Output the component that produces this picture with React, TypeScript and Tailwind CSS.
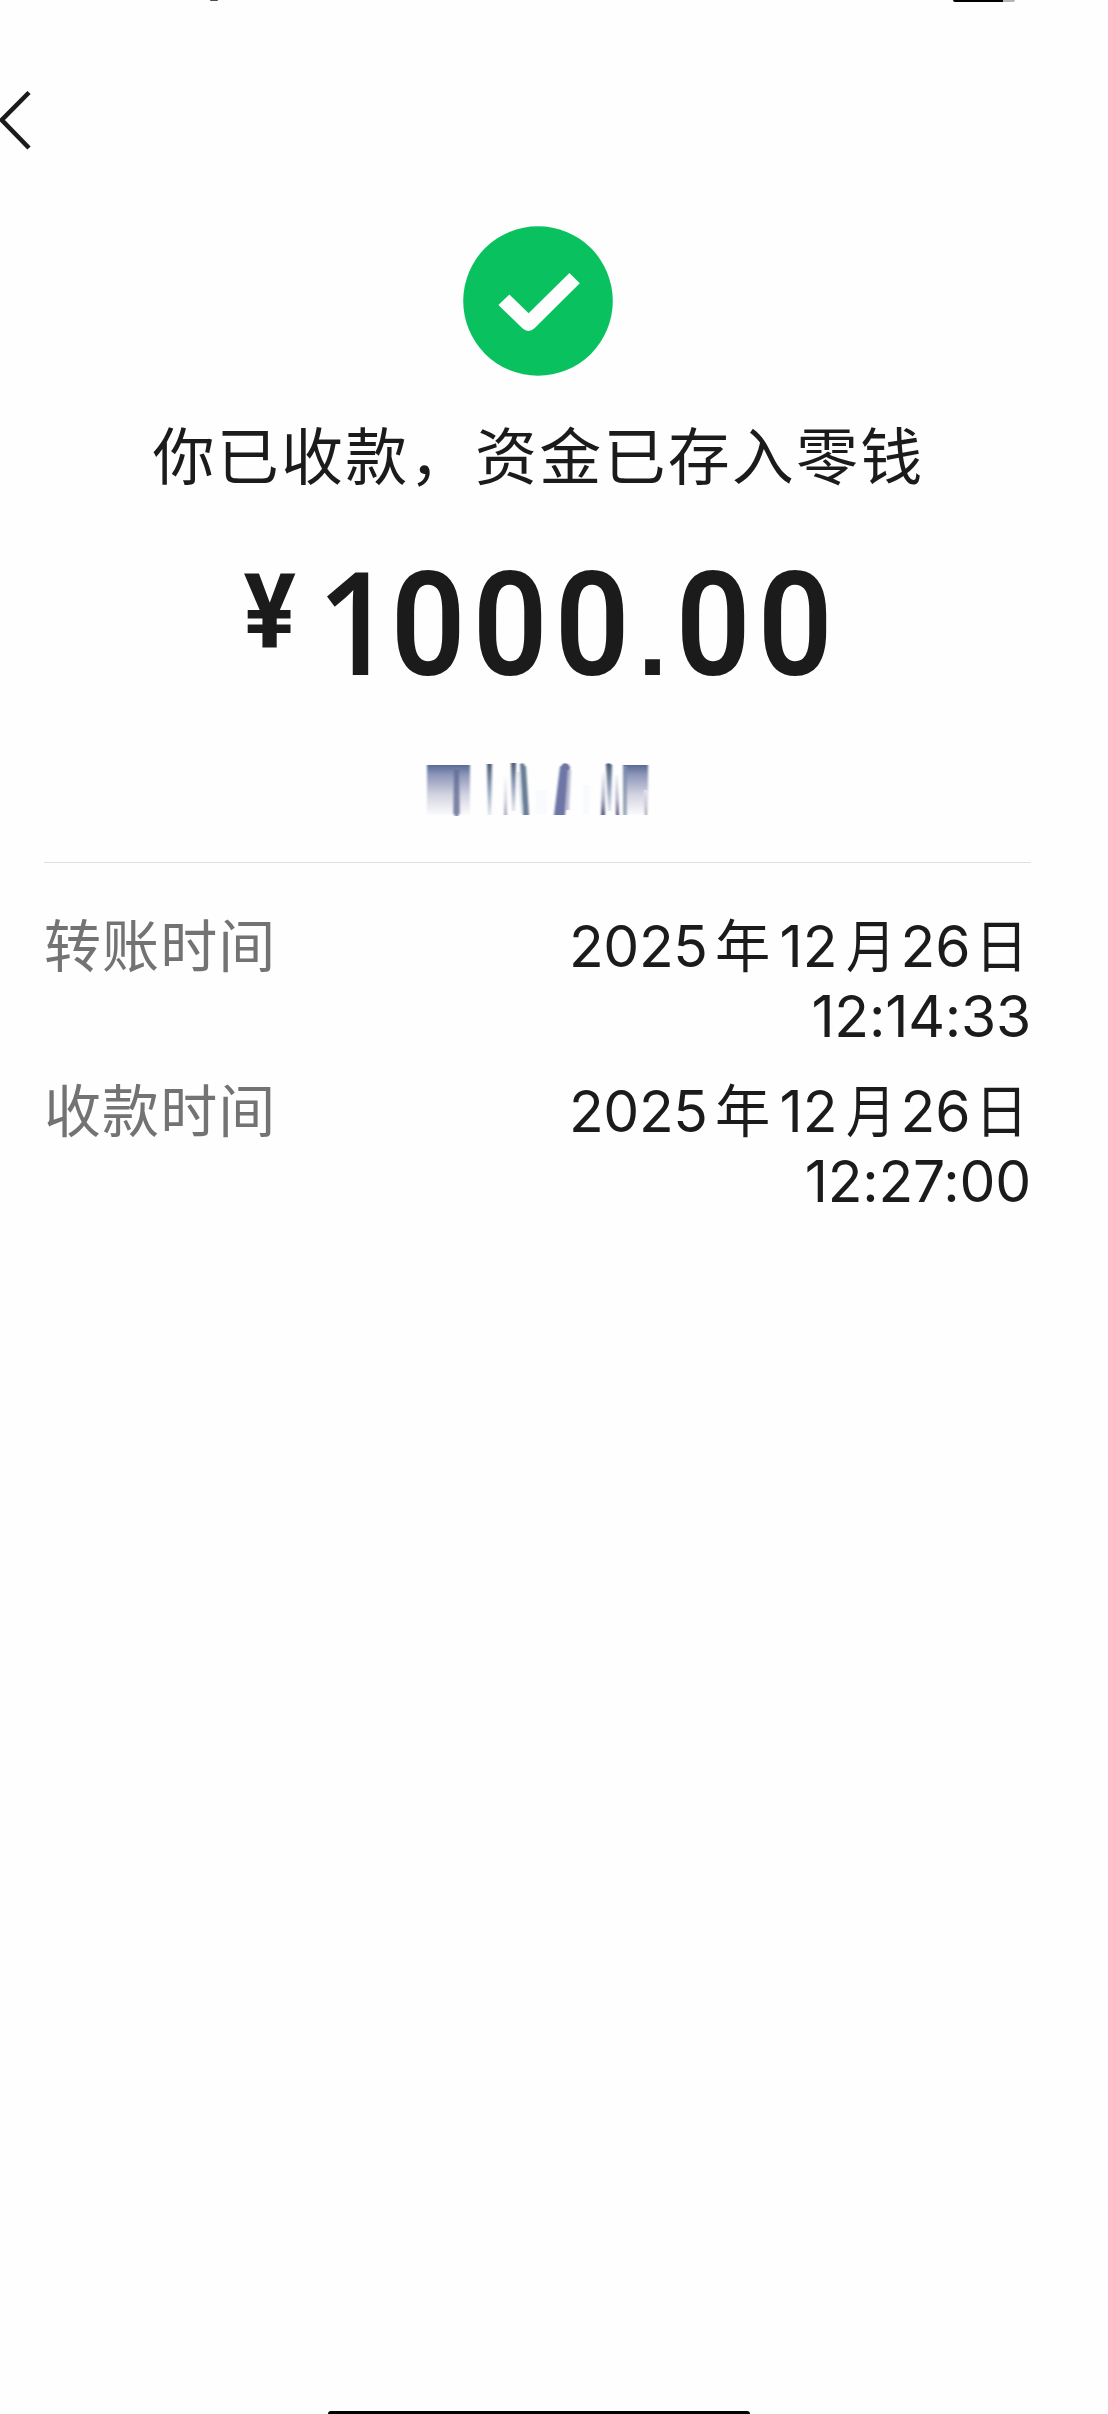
import clsx from "clsx";

const DETAILS = [
  { label: "转账时间", date: ["2025", "12", "26"], time: "12:14:33" },
  { label: "收款时间", date: ["2025", "12", "26"], time: "12:27:00" },
];

function StatusBar() {
  return (
    <div className="flex h-[3px] w-full items-start">
      <div className="ml-[210px] h-px w-[8px] rounded-b-full bg-[#4a4a4a]" />
      <div className="ml-[735px] h-[2px] w-[50px] rounded-bl-full bg-black" />
      <div className="h-[2px] w-[12px] rounded-br-full bg-[#b4b4b4]" />
    </div>
  );
}

function BackButton() {
  return (
    <button type="button" aria-label="返回" className="mt-[85px] block h-[64px] w-[40px]">
      <svg width="40" height="64" viewBox="0 0 40 64" fill="none">
        <path d="M29 4.5 1.8 32 29 60" stroke="#1b1b1b" strokeWidth="4.6" />
      </svg>
    </button>
  );
}

function SuccessIcon() {
  return (
    <svg className="mt-[74px]" width="150" height="150" viewBox="0 0 150 150">
      <circle cx="75" cy="75" r="74.8" fill="#0ac160" />
      <path
        d="M35.4 79 46.4 68.6 65.6 87.2 106.4 47 116.8 57.2 71.5 102.3Q65.4 107.6 59.4 102.3Z"
        fill="#fefefe"
      />
    </svg>
  );
}

function Digit({ value }: { value: string }) {
  return (
    <span
      className={clsx("flex justify-center", {
        "w-[63px]": value === "1",
        "w-[39px]": value === ".",
        "w-[82.2px]": value === "0",
      })}
    >
      <span
        className={clsx("leading-none", {
          "scale-x-[0.93] font-['Open_Sans'] text-[144px] font-semibold": value === "1",
          "font-['Liberation_Sans'] text-[105px] font-bold": value === ".",
          "scale-x-[0.91] font-['Roboto'] text-[144px] font-semibold": value === "0",
        })}
      >
        {value}
      </span>
    </span>
  );
}

function Amount({ value }: { value: string }) {
  return (
    <div className="mt-[49px] flex h-[152px] items-baseline pr-[22px]">
      <span className="flex w-[107px] -translate-y-[28px] justify-center">
        <span className="scale-x-[0.95] font-['Roboto'] text-[103px] leading-none font-bold">¥</span>
      </span>
      {value.split("").map((char, i) => (
        <Digit key={i} value={char} />
      ))}
    </div>
  );
}

// Payer name, smeared out for privacy
function MaskedName() {
  return (
    <svg className="mt-[63px] mr-[7px]" width="236" height="56" viewBox="416 762 236 56">
      <defs>
        <linearGradient id="down" x1="0" y1="0" x2="0" y2="1">
          <stop offset="0" stopColor="#5a6a96" />
          <stop offset="0.2" stopColor="#8f98ba" />
          <stop offset="0.6" stopColor="#d3d4e1" />
          <stop offset="1" stopColor="#fbfbfd" />
        </linearGradient>
        <linearGradient id="fade" x1="0" y1="0" x2="0" y2="1">
          <stop offset="0" stopColor="#4b5d78" />
          <stop offset="0.5" stopColor="#91a0ba" />
          <stop offset="1" stopColor="#e4e5ec" />
        </linearGradient>
        <linearGradient id="rise" x1="0" y1="0" x2="0" y2="1">
          <stop offset="0" stopColor="#f6f6fa" />
          <stop offset="0.6" stopColor="#b4b1c9" />
          <stop offset="1" stopColor="#57597f" />
        </linearGradient>
        <filter id="soft" x="-20%" y="-5%" width="140%" height="110%">
          <feGaussianBlur stdDeviation="0.9 0.3" />
        </filter>
      </defs>
      <g filter="url(#soft)">
        <path d="M427 765h43v50h-43z" fill="url(#down)" />
        <path d="M454 770h5l1 43-2 3h-3l-2-3z" fill="#626c95" opacity="0.8" />
        <path d="M487 764h5l-1 51h-3z" fill="url(#fade)" />
        <path d="M504 777h3v38h-3z" fill="url(#rise)" opacity="0.5" />
        <path d="M511 763h5l-1 48h-3z" fill="url(#fade)" />
        <path d="M520 764l3-1 3 4 3 48h-6z" fill="#687d96" />
        <path d="M517 772h3l3 41h-2z" fill="#dde5ec" />
        <path d="M560 767l4-4 4 1 2 3-5 48h-11z" fill="#6d76a4" />
        <path d="M568 770h3l-2 40h-4z" fill="#b9bdd2" />
        <path d="M535 790h12v24h-12zM583 785h7v29h-7z" fill="#edf3fa" opacity="0.35" />
        <path d="M602 772h3v43h-4z" fill="url(#rise)" />
        <path d="M606 764l3-1 3 2-1 46h-3z" fill="url(#fade)" />
        <path d="M615 775h3l1 40h-3z" fill="url(#rise)" />
        <path d="M623 765h25v50h-25z" fill="url(#down)" />
        <path d="M623 766h4v49h-4z" fill="#7e8eab" opacity="0.75" />
        <path d="M644 790h3v25h-2z" fill="url(#rise)" opacity="0.7" />
      </g>
    </svg>
  );
}

function DateLine({ date: [year, month, day] }: { date: string[] }) {
  return (
    <div className="flex items-baseline">
      <span className="w-[145.5px] font-['Inter'] tracking-[-0.4px]">{year}</span>
      <span className="w-[65px] origin-left scale-x-[0.97]">年</span>
      <span className="w-[66px] font-['Inter']">{month}</span>
      <span className="w-[55px] origin-left scale-x-[0.87]">月</span>
      <span className="w-[74px] font-['Inter']">{day}</span>
      <span className="w-[56.5px] origin-left scale-x-[0.93]">日</span>
    </div>
  );
}

export default function App() {
  return (
    <div className="flex h-[2414px] w-[1108px] flex-col overflow-hidden bg-[#fefefe] font-['Noto_Sans_CJK_SC',sans-serif] text-[#1b1b1b]">
      <StatusBar />
      <BackButton />
      <main className="flex w-[1075px] flex-1 flex-col items-center">
        <SuccessIcon />
        <h1 className="mt-[32px] pl-[2px] text-[62px] leading-[90px] font-normal tracking-[2.2px] whitespace-nowrap">
          你已收款，<span className="ml-[1.5px]">资金已存入零钱</span>
        </h1>
        <Amount value="1000.00" />
        <MaskedName />
        <div className="mt-[44px] w-full px-[44px]">
          <div className="h-px bg-[#dfdfdf]" />
          <dl className="mt-[44px] flex flex-col gap-[21px] text-[57px] leading-[70px]">
            {DETAILS.map(({ label, date, time }) => (
              <div key={label} className="flex h-[144px] justify-between whitespace-nowrap">
                <dt className="tracking-[1.1px] text-[#737373]">{label}</dt>
                <dd className="flex flex-col items-end">
                  <DateLine date={date} />
                  <span className="font-['Inter'] tracking-[-0.2px]">{time}</span>
                </dd>
              </div>
            ))}
          </dl>
        </div>
      </main>
      <div className="ml-[328px] h-[3px] w-[422px] rounded-t-[6px] bg-black" />
    </div>
  );
}
